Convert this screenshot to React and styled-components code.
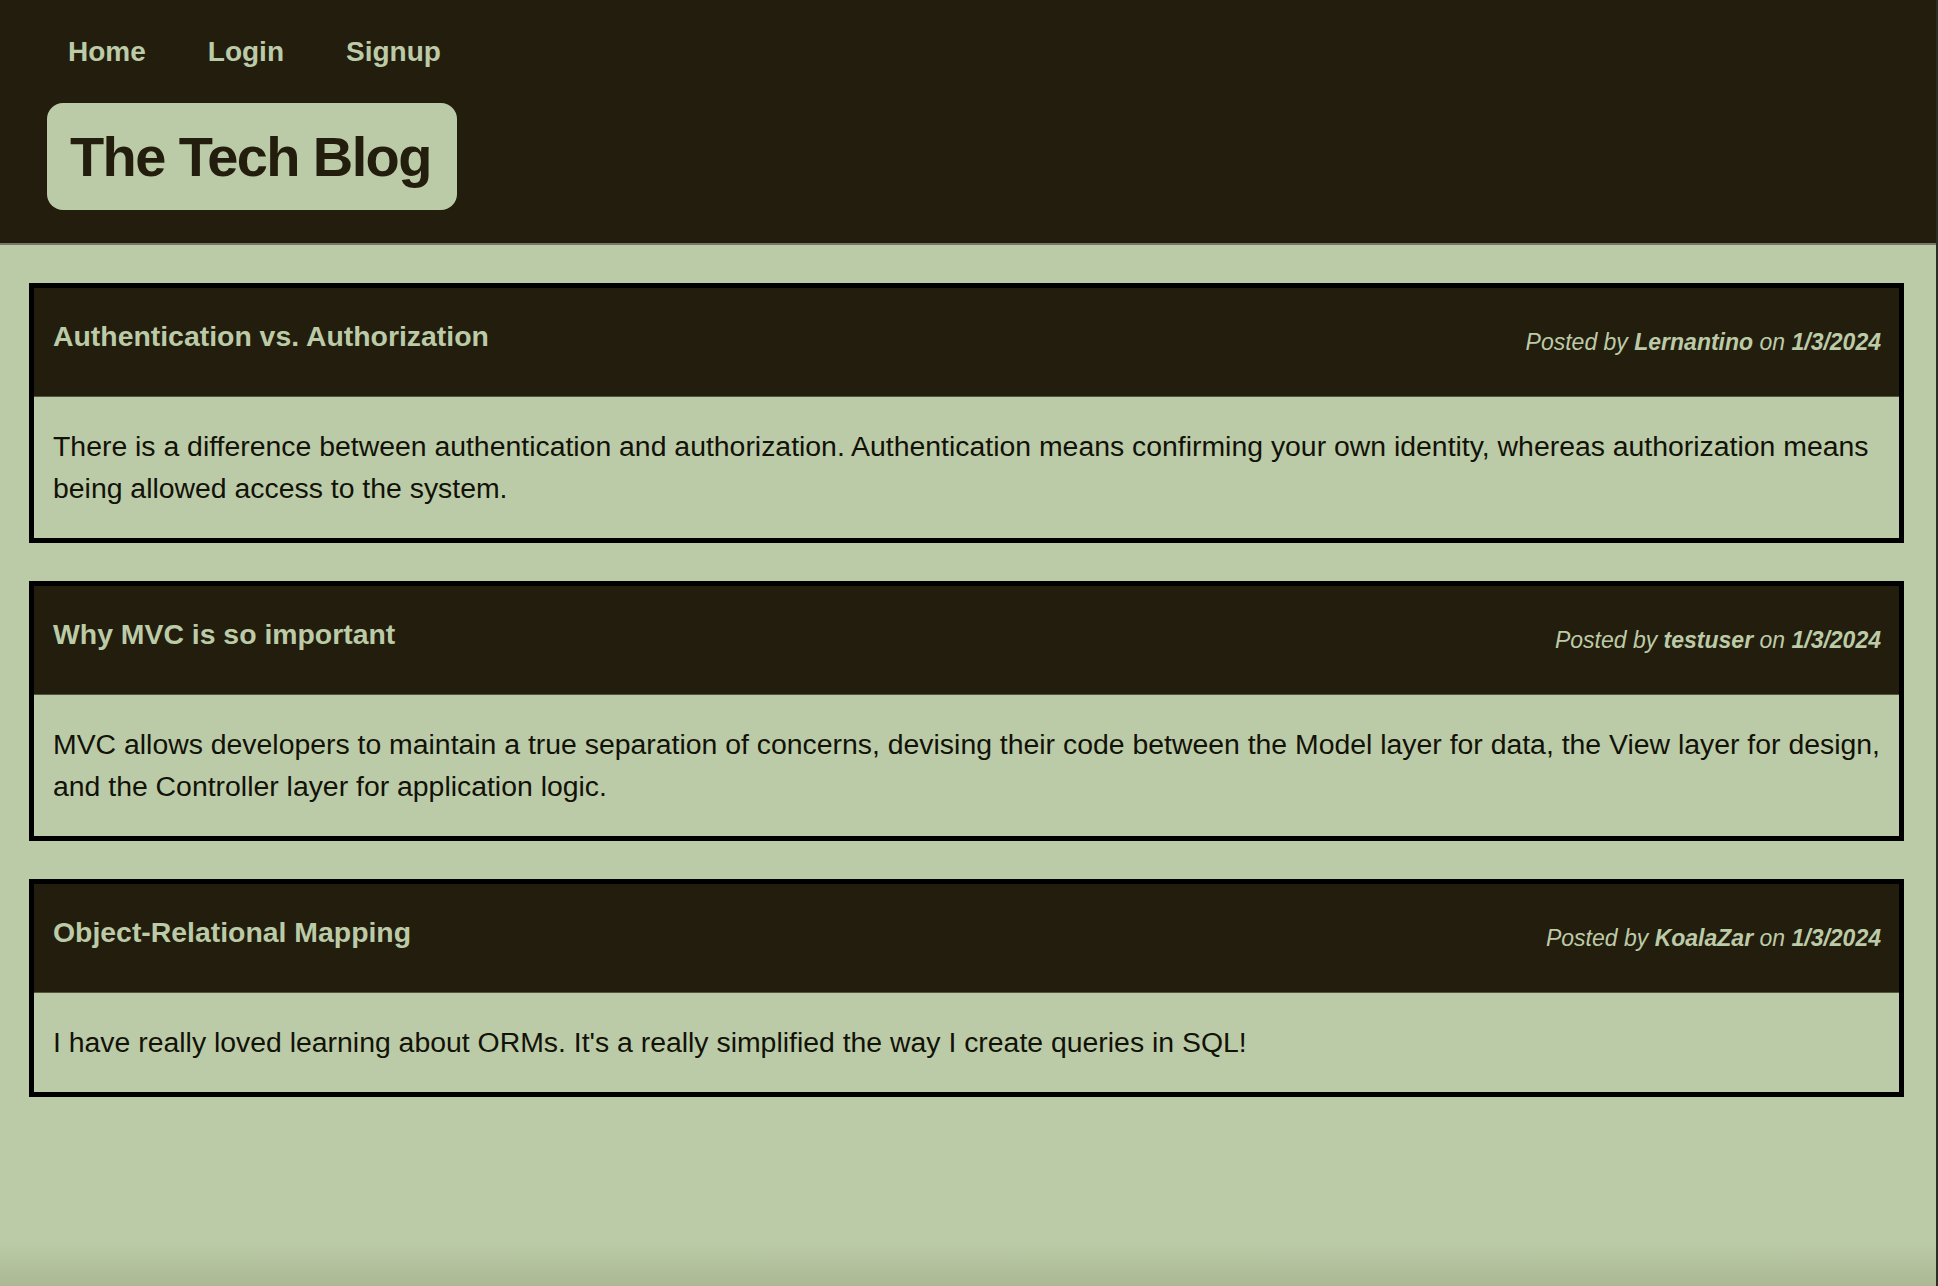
import React from "react";
import styled, { createGlobalStyle } from "styled-components";

const posts = [
  {
    id: 1,
    title: "Authentication vs. Authorization",
    author: "Lernantino",
    date: "1/3/2024",
    body:
      "There is a difference between authentication and authorization. Authentication means confirming your own identity, whereas authorization means being allowed access to the system.",
  },
  {
    id: 2,
    title: "Why MVC is so important",
    author: "testuser",
    date: "1/3/2024",
    body:
      "MVC allows developers to maintain a true separation of concerns, devising their code between the Model layer for data, the View layer for design, and the Controller layer for application logic.",
  },
  {
    id: 3,
    title: "Object-Relational Mapping",
    author: "KoalaZar",
    date: "1/3/2024",
    body:
      "I have really loved learning about ORMs. It's a really simplified the way I create queries in SQL!",
  },
];

const GlobalStyle = createGlobalStyle`
  html, body {
    margin: 0;
    padding: 0;
    background: #bccba7;
  }
  body {
    font-family: "Liberation Sans", Arial, Helvetica, sans-serif;
  }
`;

const App = () => {
  return (
    <Page>
      <GlobalStyle />
      <Header>
        <Nav>
          <NavLink href="#">Home</NavLink>
          <NavLink href="#">Login</NavLink>
          <NavLink href="#">Signup</NavLink>
        </Nav>
        <Brand>The Tech Blog</Brand>
      </Header>
      <Main>
        {posts.map((post) => (
          <Card key={post.id}>
            <CardHeader>
              <CardTitle>{post.title}</CardTitle>
              <Meta>
                Posted by <strong>{post.author}</strong> on{" "}
                <strong>{post.date}</strong>
              </Meta>
            </CardHeader>
            <CardBody>{post.body}</CardBody>
          </Card>
        ))}
      </Main>
    </Page>
  );
};

const Page = styled.div`
  min-height: 100vh;
  display: flex;
  flex-direction: column;
  border-right: 2px solid #2c2c26;
  background: linear-gradient(
    to bottom,
    #bccba7 0,
    #bccba7 calc(100% - 44px),
    #aab894 100%
  );
`;

const Header = styled.header`
  background: #231d0d;
  padding: 35px 0 33px 47px;
  border-bottom: 2px solid #77776a;
  display: flex;
  flex-direction: column;
  align-items: flex-start;
  gap: 34px;
`;

const Nav = styled.nav`
  display: flex;
  gap: 62px;
  margin-left: 21px;
`;

const NavLink = styled.a`
  color: #bccba7;
  text-decoration: none;
  font-size: 28px;
  font-weight: bold;
  line-height: 34px;
`;

const Brand = styled.h1`
  margin: 0;
  background: #bccba7;
  color: #231d0d;
  border-radius: 16px;
  font-size: 56px;
  font-weight: bold;
  letter-spacing: -1.6px;
  line-height: 107px;
  padding: 0 26px 0 23px;
`;

const Main = styled.main`
  flex: 1;
  padding: 38px 32px 38px 29px;
  display: flex;
  flex-direction: column;
  gap: 38px;
`;

const Card = styled.article`
  border: 5px solid #000;
  background: #bccba7;
`;

const CardHeader = styled.div`
  background: #231d0d;
  color: #bccba7;
  display: flex;
  justify-content: space-between;
  align-items: flex-start;
  padding: 31px 18px 41px 19px;
  border-bottom: 1px solid #55553f;
`;

const CardTitle = styled.h2`
  margin: 0;
  font-size: 28.4px;
  line-height: 34px;
  font-weight: bold;
`;

const Meta = styled.span`
  margin-top: 10px;
  font-size: 23px;
  line-height: 26px;
  font-style: italic;

  strong {
    font-weight: bold;
  }
`;

const CardBody = styled.p`
  margin: 0;
  padding: 28px 18px 29px 19px;
  color: #121209;
  font-size: 28.4px;
  line-height: 42px;
`;

export default App;
